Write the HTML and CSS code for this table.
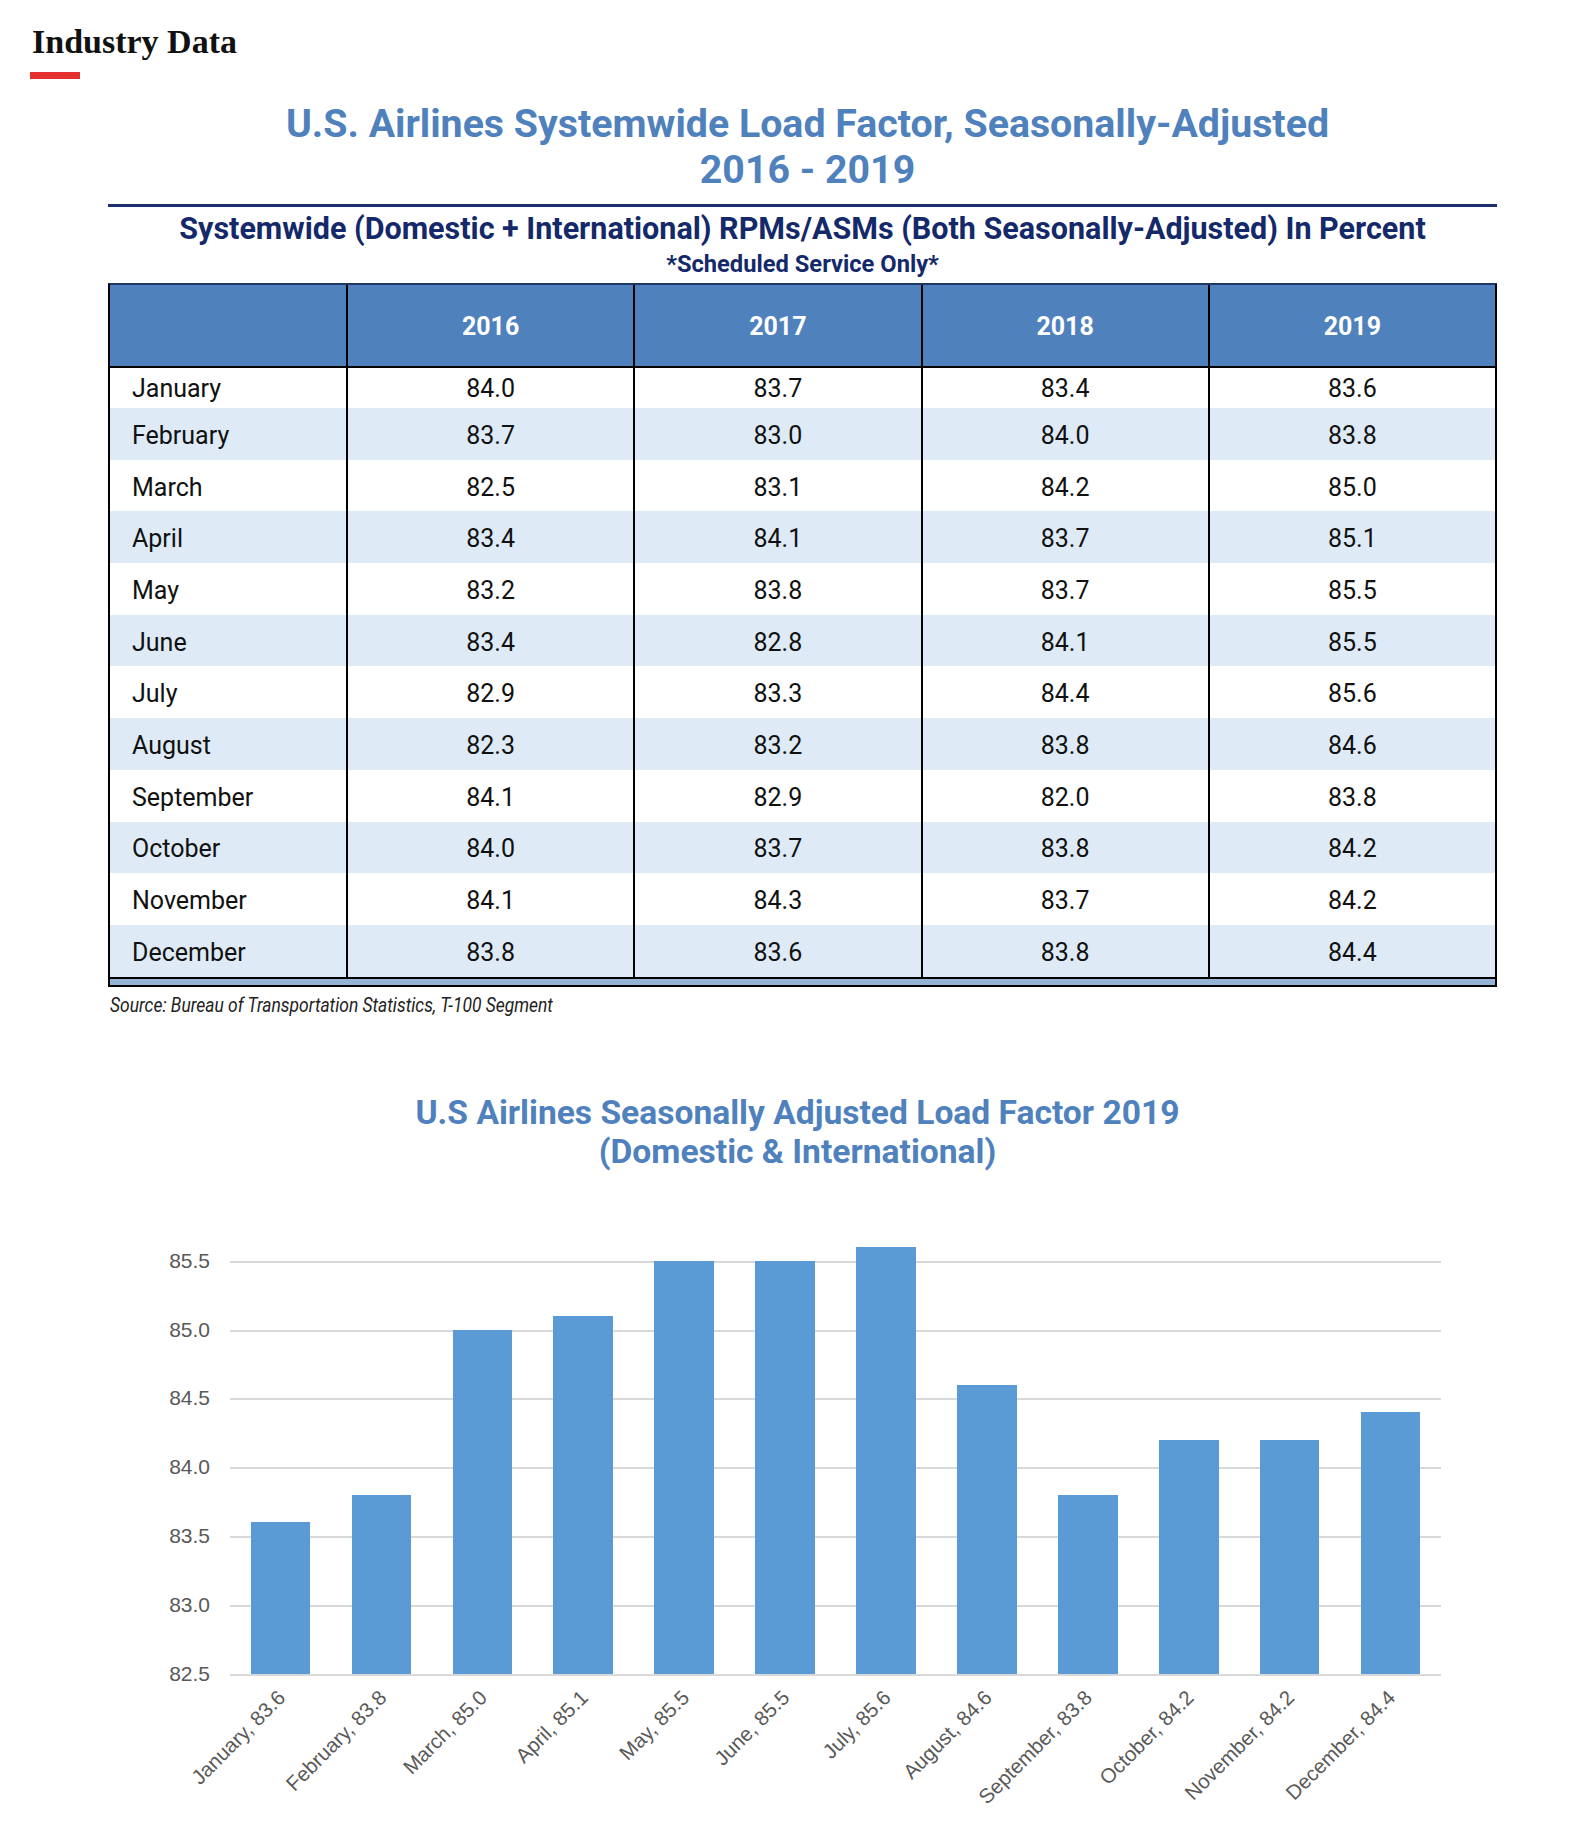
FILE: index.html
```html
<!DOCTYPE html>
<html lang="en">
<head>
<meta charset="utf-8">
<title>Industry Data</title>
<link rel="stylesheet" href="styles.css">
</head>
<body>
<div class="page">
  <header class="section-head">
    <h1 class="section-title">Industry Data</h1>
    <div class="section-rule"></div>
  </header>

  <div class="content">
    <h2 class="main-title">U.S. Airlines Systemwide Load Factor, Seasonally-Adjusted<br>2016 - 2019</h2>
    <div class="navy-rule"></div>
    <h3 class="subtitle">Systemwide (Domestic + International) RPMs/ASMs (Both Seasonally-Adjusted) In Percent</h3>
    <p class="subnote">*Scheduled Service Only*</p>

    <table class="lf-table">
      <colgroup>
        <col class="col-month">
        <col><col><col><col>
      </colgroup>
      <thead>
        <tr><th></th><th>2016</th><th>2017</th><th>2018</th><th>2019</th></tr>
      </thead>
      <tbody>
        <tr class="first"><td>January</td><td>84.0</td><td>83.7</td><td>83.4</td><td>83.6</td></tr>
        <tr class="alt"><td>February</td><td>83.7</td><td>83.0</td><td>84.0</td><td>83.8</td></tr>
        <tr><td>March</td><td>82.5</td><td>83.1</td><td>84.2</td><td>85.0</td></tr>
        <tr class="alt"><td>April</td><td>83.4</td><td>84.1</td><td>83.7</td><td>85.1</td></tr>
        <tr><td>May</td><td>83.2</td><td>83.8</td><td>83.7</td><td>85.5</td></tr>
        <tr class="alt"><td>June</td><td>83.4</td><td>82.8</td><td>84.1</td><td>85.5</td></tr>
        <tr><td>July</td><td>82.9</td><td>83.3</td><td>84.4</td><td>85.6</td></tr>
        <tr class="alt"><td>August</td><td>82.3</td><td>83.2</td><td>83.8</td><td>84.6</td></tr>
        <tr><td>September</td><td>84.1</td><td>82.9</td><td>82.0</td><td>83.8</td></tr>
        <tr class="alt"><td>October</td><td>84.0</td><td>83.7</td><td>83.8</td><td>84.2</td></tr>
        <tr><td>November</td><td>84.1</td><td>84.3</td><td>83.7</td><td>84.2</td></tr>
        <tr class="alt"><td>December</td><td>83.8</td><td>83.6</td><td>83.8</td><td>84.4</td></tr>
      </tbody>
      <tfoot>
        <tr><td colspan="5" class="band"></td></tr>
      </tfoot>
    </table>

    <p class="source"><span>Source: Bureau of Transportation Statistics, T-100 Segment</span></p>
  </div>

  <section class="chart">
    <h2 class="chart-title">U.S Airlines Seasonally Adjusted Load Factor 2019<br>(Domestic &amp; International)</h2>
    <div class="chart-body">
      <div class="y-axis">
        <span class="ytick" style="bottom: 0px">82.5</span>
        <span class="ytick" style="bottom: 68.9px">83.0</span>
        <span class="ytick" style="bottom: 137.8px">83.5</span>
        <span class="ytick" style="bottom: 206.7px">84.0</span>
        <span class="ytick" style="bottom: 275.6px">84.5</span>
        <span class="ytick" style="bottom: 344.5px">85.0</span>
        <span class="ytick" style="bottom: 413.4px">85.5</span>
      </div>
      <div class="plot">
        <div class="grid" style="bottom: 66.9px"></div>
        <div class="grid" style="bottom: 135.8px"></div>
        <div class="grid" style="bottom: 204.7px"></div>
        <div class="grid" style="bottom: 273.6px"></div>
        <div class="grid" style="bottom: 342.5px"></div>
        <div class="grid" style="bottom: 411.4px"></div>

        <div class="cat"><div class="bar" style="height: 151.6px"></div><span class="xlabel">January, 83.6</span></div>
        <div class="cat"><div class="bar" style="height: 179.1px"></div><span class="xlabel">February, 83.8</span></div>
        <div class="cat"><div class="bar" style="height: 344.5px"></div><span class="xlabel">March, 85.0</span></div>
        <div class="cat"><div class="bar" style="height: 358.3px"></div><span class="xlabel">April, 85.1</span></div>
        <div class="cat"><div class="bar" style="height: 413.4px"></div><span class="xlabel">May, 85.5</span></div>
        <div class="cat"><div class="bar" style="height: 413.4px"></div><span class="xlabel">June, 85.5</span></div>
        <div class="cat"><div class="bar" style="height: 427.2px"></div><span class="xlabel">July, 85.6</span></div>
        <div class="cat"><div class="bar" style="height: 289.4px"></div><span class="xlabel">August, 84.6</span></div>
        <div class="cat"><div class="bar" style="height: 179.1px"></div><span class="xlabel">September, 83.8</span></div>
        <div class="cat"><div class="bar" style="height: 234.3px"></div><span class="xlabel">October, 84.2</span></div>
        <div class="cat"><div class="bar" style="height: 234.3px"></div><span class="xlabel">November, 84.2</span></div>
        <div class="cat"><div class="bar" style="height: 261.8px"></div><span class="xlabel">December, 84.4</span></div>
      </div>
    </div>
  </section>
</div>
</body>
</html>
```

FILE: styles.css
```css
html, body {
  margin: 0;
  padding: 0;
  background: #ffffff;
}

body {
  font-family: Roboto, "Liberation Sans", sans-serif;
  color: #111111;
}

.page {
  width: 1595px;
  height: 1848px;
  overflow: hidden;
}

/* ---------- section heading ---------- */
.section-head {
  padding: 22px 0 0 32px;
}

.section-title {
  margin: 0;
  font-family: "Liberation Serif", "Times New Roman", serif;
  font-weight: 700;
  font-size: 34px;
  line-height: 40px;
  color: #111111;
}

.section-rule {
  width: 50px;
  height: 7px;
  margin: 10px 0 0 -2px;
  background: #e4312f;
}

/* ---------- table block ---------- */
.content {
  width: 1389px;
  margin-left: 108px;
}

.main-title {
  margin: 22px 0 0;
  padding-left: 10px;
  text-align: center;
  font-weight: 700;
  font-size: 39.3px;
  line-height: 46px;
  color: #4f81bd;
}

.navy-rule {
  height: 3px;
  margin-top: 11px;
  background: #1b2f6e;
}

.subtitle {
  margin: 5px 0 0;
  text-align: center;
  font-weight: 700;
  font-size: 30.5px;
  line-height: 34px;
  color: #14296a;
}

.subnote {
  margin: 5px 0 0;
  text-align: center;
  font-weight: 700;
  font-size: 23.7px;
  line-height: 27px;
  color: #14296a;
}

.lf-table {
  margin-top: 5px;
  width: 1389px;
  table-layout: fixed;
  border-collapse: separate;
  border-spacing: 0;
  border-top: 2px solid #1f3864;
  border-left: 2px solid #000000;
  border-right: 2px solid #000000;
  border-bottom: 2px solid #000000;
}

.col-month {
  width: 236px;
}

.lf-table th {
  height: 83px;
  padding: 2px 0 0;
  box-sizing: border-box;
  background: #4f81bd;
  color: #ffffff;
  font-weight: 700;
  font-size: 25px;
  line-height: 30px;
  text-align: center;
  vertical-align: middle;
  border-bottom: 2px solid #000000;
}

.lf-table td {
  height: 51.7px;
  padding: 4px 0 0;
  box-sizing: border-box;
  font-weight: 400;
  font-size: 25px;
  line-height: 30px;
  color: #111111;
  text-align: center;
  vertical-align: middle;
}

.lf-table tbody tr.first td {
  height: 40px;
  padding-top: 2px;
}

.lf-table th + th,
.lf-table tbody td + td {
  border-left: 2px solid #000000;
}

.lf-table tbody td:first-child {
  text-align: left;
  padding-left: 22px;
}

.lf-table tbody tr.alt td {
  background: #deebf7;
}

.lf-table td.band {
  height: 8px;
  padding: 0;
  background: #95b3d7;
  border-top: 2px solid #000000;
}

.source {
  margin: 6px 0 0;
  padding-left: 2px;
  font-style: italic;
  font-size: 21px;
  line-height: 24px;
  color: #222222;
  white-space: nowrap;
}

.source span {
  display: inline-block;
  transform: scaleX(0.83);
  transform-origin: 0 50%;
}

/* ---------- chart ---------- */
.chart {
  margin-top: 76px;
}

.chart-title {
  margin: 0;
  text-align: center;
  font-weight: 700;
  font-size: 33.6px;
  line-height: 39px;
  color: #4f81bd;
}

.chart-body {
  display: flex;
  margin-top: 70px;
}

.y-axis {
  position: relative;
  width: 230px;
  height: 433.5px;
  flex: none;
}

.ytick {
  position: absolute;
  right: 20px;
  transform: translateY(50%);
  font-family: "Liberation Sans", Arial, sans-serif;
  font-size: 21px;
  line-height: 24px;
  color: #595959;
}

.plot {
  position: relative;
  width: 1211px;
  height: 433.5px;
  display: flex;
  border-bottom: 2px solid #d9d9d9;
}

.grid {
  position: absolute;
  left: 0;
  right: 0;
  height: 2px;
  background: #d9d9d9;
}

.cat {
  position: relative;
  flex: 1;
  display: flex;
  align-items: flex-end;
  justify-content: center;
}

.bar {
  position: relative;
  width: 59.5px;
  background: #5b9bd5;
}

.xlabel {
  position: absolute;
  right: calc(50% - 1px);
  top: calc(100% + 8px);
  white-space: nowrap;
  transform-origin: 100% 50%;
  transform: rotate(-45deg);
  font-family: "Liberation Sans", Arial, sans-serif;
  font-size: 20.5px;
  line-height: 24px;
  color: #595959;
}
```
